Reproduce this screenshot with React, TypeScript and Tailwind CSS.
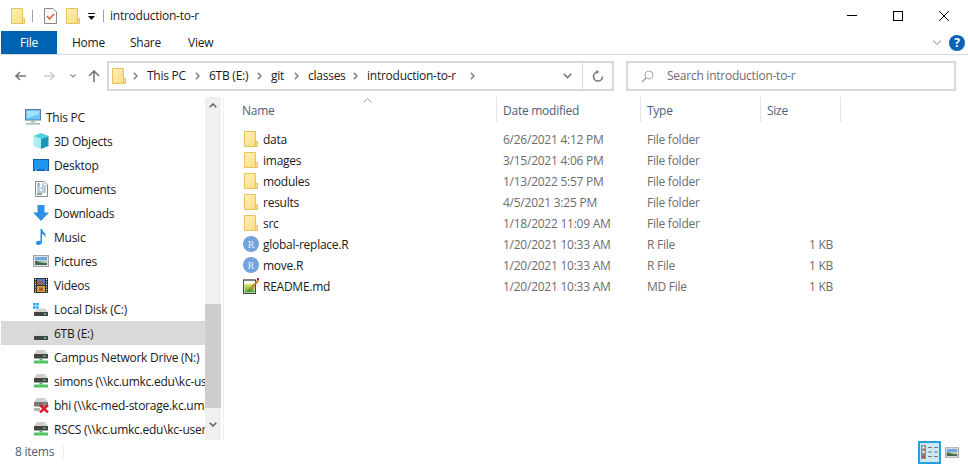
import React from 'react';

const Chevron = ({ color = '#7a7a7a' }: { color?: string }) => (
  <svg width="5" height="8" viewBox="0 0 5 8" className="shrink-0">
    <path d="M0.8 0.8 L4 4 L0.8 7.2" fill="none" stroke={color} strokeWidth="1.4" />
  </svg>
);

const Folder = () => (
  <svg width="14" height="16" viewBox="0 0 14 16" className="shrink-0">
    <defs>
      <linearGradient id="fold" x1="0" y1="0" x2="1" y2="1">
        <stop offset="0" stopColor="#fff0b8" />
        <stop offset="1" stopColor="#fbdc84" />
      </linearGradient>
    </defs>
    <path d="M0.5 0.5 H11.5 V15.5 H0.5 Z" fill="url(#fold)" stroke="#e8c35a" />
    <path d="M11.5 10.5 H13.5 V15.5 H11.5 Z" fill="#fbe08f" stroke="#e8c35a" />
  </svg>
);

const Monitor = () => (
  <svg width="16" height="16" viewBox="0 0 16 16">
    <rect x="0.5" y="0.5" width="15" height="10.5" fill="#6cc6f5" stroke="#4f7f9e" />
    <path d="M2 2 H14 V5 L2 9 Z" fill="#a2e0fb" />
    <rect x="6" y="11.5" width="4" height="2" fill="#a9b6bf" />
    <rect x="1" y="14" width="14" height="1.5" fill="#a9b3ba" />
  </svg>
);

const Cube = () => (
  <svg width="16" height="16" viewBox="0 0 16 16">
    <path d="M8 0 L15.5 3 L8 6 L0.5 3 Z" fill="#4fd0dc" />
    <path d="M0.5 3 L8 6 V16 L0.5 13 Z" fill="#a8eef0" />
    <path d="M15.5 3 L8 6 V16 L15.5 13 Z" fill="#1796b8" />
  </svg>
);

const Desktop = () => (
  <svg width="16" height="12" viewBox="0 0 16 12">
    <rect x="0" y="0" width="16" height="12" fill="#0f5fa8" />
    <rect x="1" y="1" width="14" height="9.5" fill="#1e96f0" />
    <rect x="2" y="10.7" width="2" height="0.8" fill="#dbeeff" />
    <rect x="12" y="10.7" width="2" height="0.8" fill="#dbeeff" />
  </svg>
);

const Documents = () => (
  <svg width="13" height="16" viewBox="0 0 13 16">
    <path d="M0.5 0.5 H9 L12.5 4 V15.5 H0.5 Z" fill="#fff" stroke="#8a8a8a" />
    <path d="M2 5 H5 M7 3 H9 M7 5 H11 M2 7 H11 M2 9 H5 M7 9 H11 M2 11 H11" stroke="#7d9bbd" strokeWidth="1" />
    <path d="M3.5 2 V4.5" stroke="#2a7fd6" strokeWidth="1.4" fill="none" />
    <path d="M2 13 H7" stroke="#5c7f5e" strokeWidth="1.4" />
  </svg>
);

const Downloads = () => (
  <svg width="16" height="16" viewBox="0 0 16 16">
    <path d="M4.5 0 H11.5 V7.5 H16 L8 16 L0 7.5 H4.5 Z" fill="#2e8fe6" />
  </svg>
);

const Music = () => (
  <svg width="11" height="16" viewBox="0 0 11 16">
    <path d="M4.5 0 H6 C6.4 3 10.5 4 9.8 8.5 C9.2 6.5 7.8 5.5 6 5 V13 C6 15 4 16 2.5 16 C0.8 16 0 15 0 14 C0 12.5 2 11.5 4.5 12 Z" fill="#1e90ea" />
  </svg>
);

const Pictures = ({ width = 16, height = 12 }: { width?: number; height?: number }) => (
  <svg width={width} height={height} viewBox="0 0 16 12">
    <rect x="0" y="0" width="16" height="12" fill="#a3a3a3" />
    <rect x="1.2" y="1.2" width="13.6" height="9.6" fill="#eef3f7" />
    <rect x="2" y="2" width="12" height="3.5" fill="#6fa9e6" />
    <rect x="2" y="5.5" width="12" height="4.5" fill="#b9cdb0" />
    <path d="M2 6 C5 5.5 7 8 14 8 V10 H2 Z" fill="#46694f" />
  </svg>
);

const Videos = () => (
  <svg width="14" height="15" viewBox="0 0 14 15">
    <rect x="0" y="0" width="14" height="15" fill="#333" />
    <rect x="3" y="1" width="8" height="6" fill="#3f7fd0" />
    <rect x="3" y="8" width="8" height="6" fill="#d9a63a" />
    <path d="M4 4 L7 2 L10 5 V6.5 H4 Z M5 9.5 H9 V13 H5 Z" fill="#b5553a" />
    <path d="M1 1.5 H2 M1 4 H2 M1 6.5 H2 M1 9 H2 M1 11.5 H2 M1 13.8 H2 M12 1.5 H13 M12 4 H13 M12 6.5 H13 M12 9 H13 M12 11.5 H13 M12 13.8 H13" stroke="#fff" />
  </svg>
);

// plain drive, with room above for the windows flag
const Drive = ({ flag = false }: { flag?: boolean }) => (
  <svg width="16" height="16" viewBox="0 0 16 16">
    {flag && <path d="M0 2 H2.6 V4.6 H0 Z M3.2 2 H5.8 V4.6 H3.2 Z M0 5.2 H2.6 V7.8 H0 Z M3.2 5.2 H5.8 V7.8 H3.2 Z" fill="#1fa9ee" />}
    <path d="M4 7.5 H12 L15 11 H1 Z" fill="#d4d4d4" />
    <rect x="1" y="11" width="14" height="4" rx="0.5" fill="#444" />
    <rect x="11" y="12.3" width="2" height="1.4" fill="#5fe07a" />
  </svg>
);

const NetDrive = ({ off = false }: { off?: boolean }) => (
  <svg width="16" height="16" viewBox="0 0 16 16">
    <path d="M4 1 H12 L15 5 H1 Z" fill="#cfcfcf" />
    <rect x="1" y="5" width="14" height="4.5" rx="0.5" fill={off ? '#777' : '#444'} />
    <rect x="10.5" y="6.4" width="2" height="1.4" fill={off ? '#aaa' : '#5fe07a'} />
    {off ? (
      <>
        <rect x="1" y="11" width="6" height="3" fill="#b5b5b5" />
        <path d="M7 8 L15 15.5 M15 8 L7 15.5" stroke="#d81f2a" strokeWidth="2.4" />
      </>
    ) : (
      <>
        <rect x="6.5" y="9.5" width="3" height="2" fill="#3cb44f" />
        <rect x="1" y="11.5" width="14" height="3" fill="#52c466" />
      </>
    )}
  </svg>
);

const RFile = () => (
  <svg width="16" height="16" viewBox="0 0 16 16" className="shrink-0">
    <circle cx="8" cy="8" r="8" fill="#72a3da" />
    <text x="8" y="11.5" textAnchor="middle" fontSize="10" fill="#e8f1fb" fontFamily="'Liberation Serif', serif">R</text>
  </svg>
);

const Notepad = () => (
  <svg width="16" height="16" viewBox="0 0 16 16" className="shrink-0">
    <defs>
      <linearGradient id="pad" x1="0" y1="0" x2="0" y2="1">
        <stop offset="0" stopColor="#e6e86a" />
        <stop offset="1" stopColor="#3fa83a" />
      </linearGradient>
    </defs>
    <rect x="0.5" y="2" width="12" height="13.5" fill="#f7f7f2" stroke="#444" />
    <path d="M1 1 V3 M3 1 V3 M5 1 V3 M7 1 V3 M9 1 V3 M11 1 V3" stroke="#666" />
    <rect x="1.5" y="6" width="10" height="8.5" fill="url(#pad)" />
    <path d="M15 1.5 L16 2.5 L8 12 L5.8 13 L6.8 10.5 Z" fill="#eda423" stroke="#7a4a10" strokeWidth="0.6" />
    <rect x="14" y="0" width="2" height="2" fill="#a5203a" />
  </svg>
);

const navItems: { icon: React.ReactNode; label: string; top?: boolean; selected?: boolean }[] = [
  { icon: <Monitor />, label: 'This PC', top: true },
  { icon: <Cube />, label: '3D Objects' },
  { icon: <Desktop />, label: 'Desktop' },
  { icon: <Documents />, label: 'Documents' },
  { icon: <Downloads />, label: 'Downloads' },
  { icon: <Music />, label: 'Music' },
  { icon: <Pictures />, label: 'Pictures' },
  { icon: <Videos />, label: 'Videos' },
  { icon: <Drive flag />, label: 'Local Disk (C:)' },
  { icon: <Drive />, label: '6TB (E:)', selected: true },
  { icon: <NetDrive />, label: 'Campus Network Drive (N:)' },
  { icon: <NetDrive />, label: 'simons (\\\\kc.umkc.edu\\kc-users\\simons)' },
  { icon: <NetDrive off />, label: 'bhi (\\\\kc-med-storage.kc.umkc.edu)' },
  { icon: <NetDrive />, label: 'RSCS (\\\\kc.umkc.edu\\kc-users\\rscs)' },
];

const files = [
  { icon: <Folder />, name: 'data', date: '6/26/2021 4:12 PM', type: 'File folder', size: '' },
  { icon: <Folder />, name: 'images', date: '3/15/2021 4:06 PM', type: 'File folder', size: '' },
  { icon: <Folder />, name: 'modules', date: '1/13/2022 5:57 PM', type: 'File folder', size: '' },
  { icon: <Folder />, name: 'results', date: '4/5/2021 3:25 PM', type: 'File folder', size: '' },
  { icon: <Folder />, name: 'src', date: '1/18/2022 11:09 AM', type: 'File folder', size: '' },
  { icon: <RFile />, name: 'global-replace.R', date: '1/20/2021 10:33 AM', type: 'R File', size: '1 KB' },
  { icon: <RFile />, name: 'move.R', date: '1/20/2021 10:33 AM', type: 'R File', size: '1 KB' },
  { icon: <Notepad />, name: 'README.md', date: '1/20/2021 10:33 AM', type: 'MD File', size: '1 KB' },
];

export default function App() {
  return (
    <div className="w-[968px] h-[464px] bg-white overflow-hidden flex flex-col text-[12px] text-[#1a1a1a] font-['Open_Sans',sans-serif] tracking-[-0.25px]">
      {/* Title bar */}
      <div className="h-[31px] flex items-center shrink-0">
        <div className="ml-[11px]"><Folder /></div>
        <div className="ml-[7px] w-px h-[12px] bg-[#a0a0a0]" />
        <svg width="13" height="16" viewBox="0 0 13 16" className="ml-[11px]">
          <path d="M0.5 0.5 H9 L12.5 4 V15.5 H0.5 Z" fill="#fafafa" stroke="#8a8a8a" />
          <path d="M3 8 L5.5 11 L10 6" fill="none" stroke="#e0562a" strokeWidth="1.4" />
        </svg>
        <div className="ml-[9px]"><Folder /></div>
        <svg width="8" height="8" viewBox="0 0 8 8" className="ml-[8px] mt-[3px]">
          <path d="M0 0 H7 V1 H0 Z M0 3 H7 L3.5 7 Z" fill="#111" />
        </svg>
        <div className="ml-[7px] w-px h-[12px] bg-[#a0a0a0]" />
        <span className="ml-[6px]">introduction-to-r</span>
        <div className="ml-auto flex items-center">
          <div className="w-[46px] flex justify-center"><div className="w-[10px] h-px bg-black" /></div>
          <div className="w-[46px] flex justify-center"><div className="w-[10px] h-[10px] border border-black" /></div>
          <div className="w-[46px] flex justify-center">
            <svg width="10" height="10" viewBox="0 0 10 10"><path d="M0 0 L10 10 M10 0 L0 10" stroke="#000" strokeWidth="1" /></svg>
          </div>
          <div className="w-px" />
        </div>
      </div>

      {/* Ribbon tabs */}
      <div className="h-[24px] flex items-stretch shrink-0 border-b border-[#dadbdc] pl-px">
        <div className="w-[56px] h-[23px] bg-[#0063b1] text-white flex items-center justify-center">File</div>
        <div className="ml-[15px] w-[58px] flex items-center">Home</div>
        <div className="w-[58px] flex items-center">Share</div>
        <div className="flex items-center">View</div>
        <div className="ml-auto flex items-center">
          <svg width="10" height="6" viewBox="0 0 10 6"><path d="M1 0.5 L5 4.5 L9 0.5" fill="none" stroke="#b5b5b5" strokeWidth="1.2" /></svg>
          <div className="ml-[7px] mr-[3px] w-[16px] h-[16px] rounded-full bg-[#0c62b5] text-white flex items-center justify-center text-[12px] font-bold">?</div>
        </div>
      </div>

      {/* Address row */}
      <div className="h-[42px] flex items-center shrink-0">
        <div className="w-[107px] flex items-center shrink-0">
          <svg width="12" height="10" viewBox="0 0 12 10" className="ml-[14px]"><path d="M6 1 L2 5 L6 9 M2 5 H12" fill="none" stroke="#777" strokeWidth="1.6" /></svg>
          <svg width="12" height="10" viewBox="0 0 12 10" className="ml-[18px]"><path d="M6 1 L10 5 L6 9 M0 5 H10" fill="none" stroke="#cfcfcf" strokeWidth="1.6" /></svg>
          <svg width="6" height="4" viewBox="0 0 6 4" className="ml-[14px]"><path d="M0.5 0.5 L3 3 L5.5 0.5" fill="none" stroke="#8d8d8d" strokeWidth="1.2" /></svg>
          <svg width="12" height="12" viewBox="0 0 12 12" className="ml-[12px]"><path d="M1 6 L6 1 L11 6 M6 1 V12" fill="none" stroke="#777" strokeWidth="1.6" /></svg>
        </div>
        <div className="w-[507px] h-[30px] border-2 border-[#d9d9d9] flex items-center shrink-0">
          <div className="ml-[3px]"><Folder /></div>
          <div className="flex items-center ml-[7px] text-[#1a1a1a]">
            <Chevron /><span className="ml-[9px] w-[48px]">This PC</span>
            <Chevron /><span className="ml-[9px] w-[48px]">6TB (E:)</span>
            <Chevron /><span className="ml-[9px] w-[23px]">git</span>
            <Chevron /><span className="ml-[9px] w-[45px]">classes</span>
            <Chevron /><span className="ml-[9px] w-[103px]">introduction-to-r</span>
            <Chevron />
          </div>
          <div className="ml-auto flex items-center h-full">
            <svg width="9" height="6" viewBox="0 0 9 6" className="mr-[10px]"><path d="M0.7 0.7 L4.5 4.5 L8.3 0.7" fill="none" stroke="#777" strokeWidth="1.6" /></svg>
            <div className="w-[30px] h-full border-l border-[#d9d9d9] flex items-center justify-center">
              <svg width="12" height="12" viewBox="0 0 12 12"><path d="M6 2 A4.5 4.5 0 1 0 10.5 6.5" fill="none" stroke="#7b7b7b" strokeWidth="1.6" /><path d="M4 0 L7.5 2 L4 4 Z" fill="#7b7b7b" /></svg>
            </div>
          </div>
        </div>
        <div className="ml-[12px] w-[330px] h-[30px] border-2 border-[#d9d9d9] flex items-center shrink-0 text-[#6d6d6d]">
          <svg width="13" height="13" viewBox="0 0 13 13" className="ml-[13px]"><circle cx="8" cy="5" r="4" fill="none" stroke="#a8a8a8" /><path d="M5 8 L1 12" stroke="#c09a7a" strokeWidth="1.2" /></svg>
          <span className="ml-[13px]">Search introduction-to-r</span>
        </div>
      </div>

      {/* Main area */}
      <div className="h-[343px] flex shrink-0">
        <div className="w-[204px] ml-px shrink-0 pt-[8px] overflow-hidden">
          {navItems.map((item) => (
            <div key={item.label} className={`h-[24px] flex items-center whitespace-nowrap overflow-hidden ${item.selected ? 'bg-[#d9d9d9]' : ''}`}>
              <div className={`w-[16px] h-[16px] flex items-center justify-center shrink-0 ${item.top ? 'ml-[24px]' : 'ml-[32px]'}`}>{item.icon}</div>
              <span className="ml-[5px] pt-px">{item.label}</span>
            </div>
          ))}
        </div>

        {/* Sidebar scrollbar */}
        <div className="w-[16px] shrink-0 bg-[#f0f0f0] flex flex-col items-center">
          <div className="h-[17px] flex items-center justify-center shrink-0">
            <svg width="8" height="5" viewBox="0 0 8 5"><path d="M0.7 4.3 L4 1 L7.3 4.3" fill="none" stroke="#606060" strokeWidth="1.5" /></svg>
          </div>
          <div className="h-[190px] shrink-0" />
          <div className="h-[104px] w-full bg-[#cdcdcd] shrink-0" />
          <div className="flex-1 flex items-center justify-center">
            <svg width="8" height="5" viewBox="0 0 8 5"><path d="M0.7 0.7 L4 4 L7.3 0.7" fill="none" stroke="#606060" strokeWidth="1.5" /></svg>
          </div>
        </div>
        <div className="ml-[2px] w-px bg-[#f0f0f0] shrink-0" />

        {/* File list */}
        <div className="flex-1 relative">
          <svg width="9" height="5" viewBox="0 0 9 5" className="absolute left-[139px] top-px"><path d="M0.5 4.5 L4.5 0.5 L8.5 4.5" fill="none" stroke="#a0a0a0" /></svg>
          <div className="h-[25px] flex text-[#4c607a]">
            <div className="w-[273px] pl-[18px] pt-[2px] flex items-center border-r border-[#e5e5e5]">Name</div>
            <div className="w-[144px] pl-[6px] pt-[2px] flex items-center border-r border-[#e5e5e5]">Date modified</div>
            <div className="w-[120px] pl-[6px] pt-[2px] flex items-center border-r border-[#e5e5e5]">Type</div>
            <div className="w-[80px] pl-[6px] pt-[2px] flex items-center border-r border-[#e5e5e5]">Size</div>
          </div>
          <div className="mt-[6px]">
            {files.map((f) => (
              <div key={f.name} className="h-[21px] flex items-center whitespace-nowrap">
                <div className="w-[272px] flex items-center">
                  <div className="ml-[19px] w-[16px] flex justify-center shrink-0">{f.icon}</div>
                  <span className="ml-[4px] pt-[2px]">{f.name}</span>
                </div>
                <div className="w-[144px] pl-[7px] pt-[2px] text-[#6d6d6d]">{f.date}</div>
                <div className="w-[120px] pl-[7px] pt-[2px] text-[#6d6d6d]">{f.type}</div>
                <div className="w-[73px] pt-[2px] text-right text-[#6d6d6d]">{f.size}</div>
              </div>
            ))}
          </div>
        </div>
      </div>

      {/* Status bar */}
      <div className="flex-1 flex items-center text-[#4c607a]">
        <span className="ml-[15px] w-[48px]">8 items</span>
        <div className="w-px h-[16px] bg-[#f0f0f0]" />
        <div className="ml-auto flex items-center">
          <div className="w-[23px] h-[23px] border-2 border-[#26a0da] bg-[#cce8f7] flex items-center justify-center">
            <svg width="17" height="14" viewBox="0 0 17 14">
              <rect x="0" y="0" width="5" height="14" fill="#8c8c8c" />
              <rect x="1.5" y="1.5" width="2" height="2" fill="#fff" />
              <rect x="1.5" y="6" width="2" height="2" fill="#fff" />
              <rect x="1.5" y="10.5" width="2" height="2" fill="#a33" />
              <path d="M7 2.5 H11 M13 2.5 H17 M7 7 H11 M13 7 H17 M7 11.5 H11 M13 11.5 H17" stroke="#777" />
            </svg>
          </div>
          <div className="ml-[4px] mr-[9px] flex"><Pictures width={14} height={11} /></div>
        </div>
      </div>
    </div>
  );
}
